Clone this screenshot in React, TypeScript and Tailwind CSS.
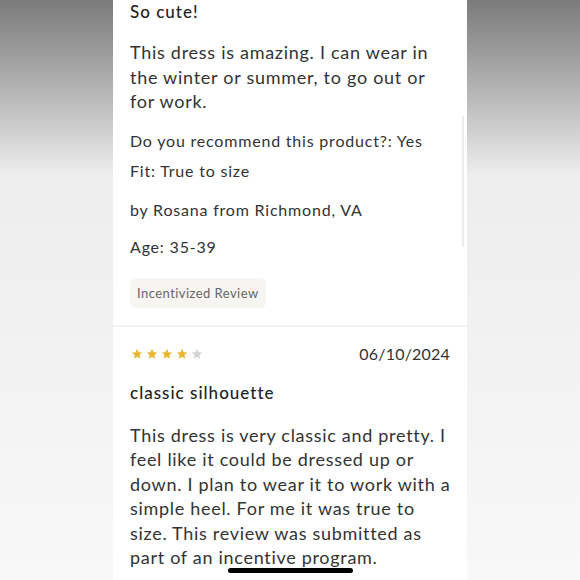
export default function App() {
  const stars = [true, true, true, true, false];
  return (
    <div className="relative flex h-[580px] w-[580px] overflow-hidden bg-gradient-to-b from-[#7b7b7b] via-[#ededed] via-30% to-[#f8f8f8] font-['Lato',sans-serif] text-[#333]">
      <div className="w-[113px] shrink-0" />
      <div className="relative flex w-[354px] shrink-0 flex-col bg-white">
        {/* First review (scrolled) */}
        <div className="px-[17px] pb-[17px]">
          <h3 className="mt-[-1px] text-[17px] font-medium leading-[26px] tracking-[1px] text-[#222]">So cute!</h3>
          <p className="mt-[15px] text-[18px] leading-[24.5px] tracking-[0.72px] text-[#333]">
            This dress is amazing. I can wear in the winter or summer, to go out or for work.
          </p>
          <p className="mt-[16px] text-[16px] leading-[22px] tracking-[0.8px]">Do you recommend this product?: Yes</p>
          <p className="mt-[8px] text-[16px] leading-[22px] tracking-[0.8px]">Fit: True to size</p>
          <p className="mt-[17px] text-[16px] leading-[22px] tracking-[0.8px]">by Rosana from Richmond, VA</p>
          <p className="mt-[15px] text-[16px] leading-[22px] tracking-[0.8px]">Age: 35-39</p>
          <span className="mt-[20px] inline-block rounded-md bg-[#f6f5f2] px-[7px] py-[6px] text-[13px] leading-[18px] tracking-[0.45px] text-[#666]">
            Incentivized Review
          </span>
        </div>
        <div className="h-[2px] bg-[#f2f2f2]" />
        {/* Second review */}
        <div className="pl-[17px] pr-[12px] pt-[16px]">
          <div className="flex items-center justify-between pr-[5px]">
            <div className="flex gap-[3px] pl-[1px]">
              {stars.map((on, i) => (
                <svg key={i} width="12" height="12" viewBox="0 0 24 24">
                  <path
                    d="M12 1.5l3 7.1 7.5.6-5.7 4.9 1.8 7.4L12 17.6l-6.6 3.9 1.8-7.4L1.5 9.2l7.5-.6z"
                    fill={on ? "#e8b730" : "#d4d4d4"}
                  />
                </svg>
              ))}
            </div>
            <span className="text-[16px] leading-[22px] tracking-[0.2px] text-[#333]">06/10/2024</span>
          </div>
          <h3 className="mt-[16px] text-[17px] font-medium leading-[24px] tracking-[1px] text-[#222]">classic silhouette</h3>
          <p className="mt-[18px] text-[18px] leading-[24.5px] tracking-[0.7px] text-[#333]">
            This dress is very classic and pretty. I feel like it could be dressed up or down. I plan to wear it to
            work with a simple heel. For me it was true to size. This review was submitted as part of an incentive
            program.
          </p>
        </div>
        {/* scrollbar */}
        <div className="absolute right-[3px] top-[116px] h-[131px] w-[2px] rounded-full bg-[#ececec]" />
        {/* home indicator */}
        <div className="absolute bottom-[7px] left-[115px] h-[5px] w-[125px] rounded-full bg-black" />
      </div>
      <div className="flex-1" />
    </div>
  );
}
